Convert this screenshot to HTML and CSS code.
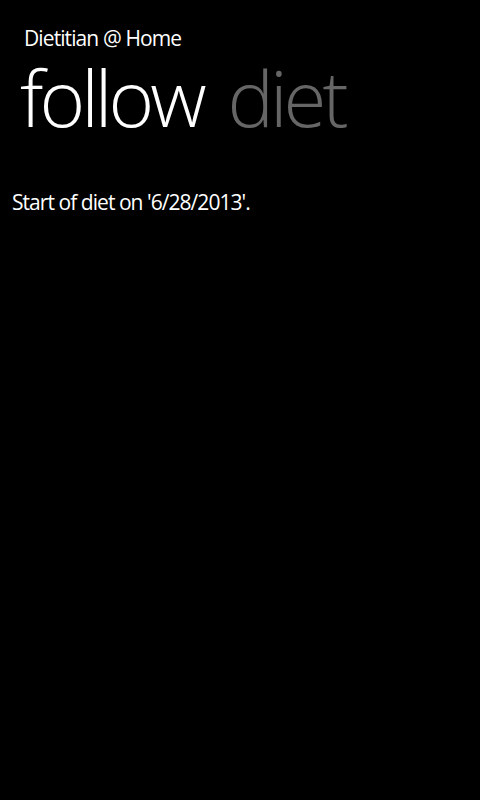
FILE: index.html
```html
<!DOCTYPE html>
<html>
<head>
<meta charset="utf-8">
<link rel="stylesheet" href="styles.css">
</head>
<body>
<div class="page">
  <div class="app-title">Dietitian @ Home</div>
  <div class="pivot">
    <span class="pivot-item active">follow</span>
    <span class="pivot-item">diet</span>
  </div>
  <div class="content">Start of diet on '6/28/2013'.</div>
</div>
</body>
</html>
```
FILE: styles.css
```css
html, body {
  margin: 0;
  padding: 0;
  background: #000;
  width: 480px;
  height: 800px;
  overflow: hidden;
}
.page {
  font-family: "Open Sans", "Noto Sans", sans-serif;
  color: #fff;
  display: flex;
  flex-direction: column;
}
.app-title {
  font-size: 21px;
  line-height: 28px;
  letter-spacing: -0.9px;
  padding: 24px 0 0 24px;
}
.pivot {
  display: flex;
  gap: 25px;
  padding-left: 20px;
}
.pivot-item {
  font-size: 78px;
  font-weight: 300;
  line-height: 90px;
  color: #666;
  letter-spacing: -4px;
}
.pivot-item.active {
  color: #fff;
}
.content {
  font-size: 21px;
  line-height: 28px;
  letter-spacing: -0.95px;
  padding: 46px 0 0 12px;
}
```
